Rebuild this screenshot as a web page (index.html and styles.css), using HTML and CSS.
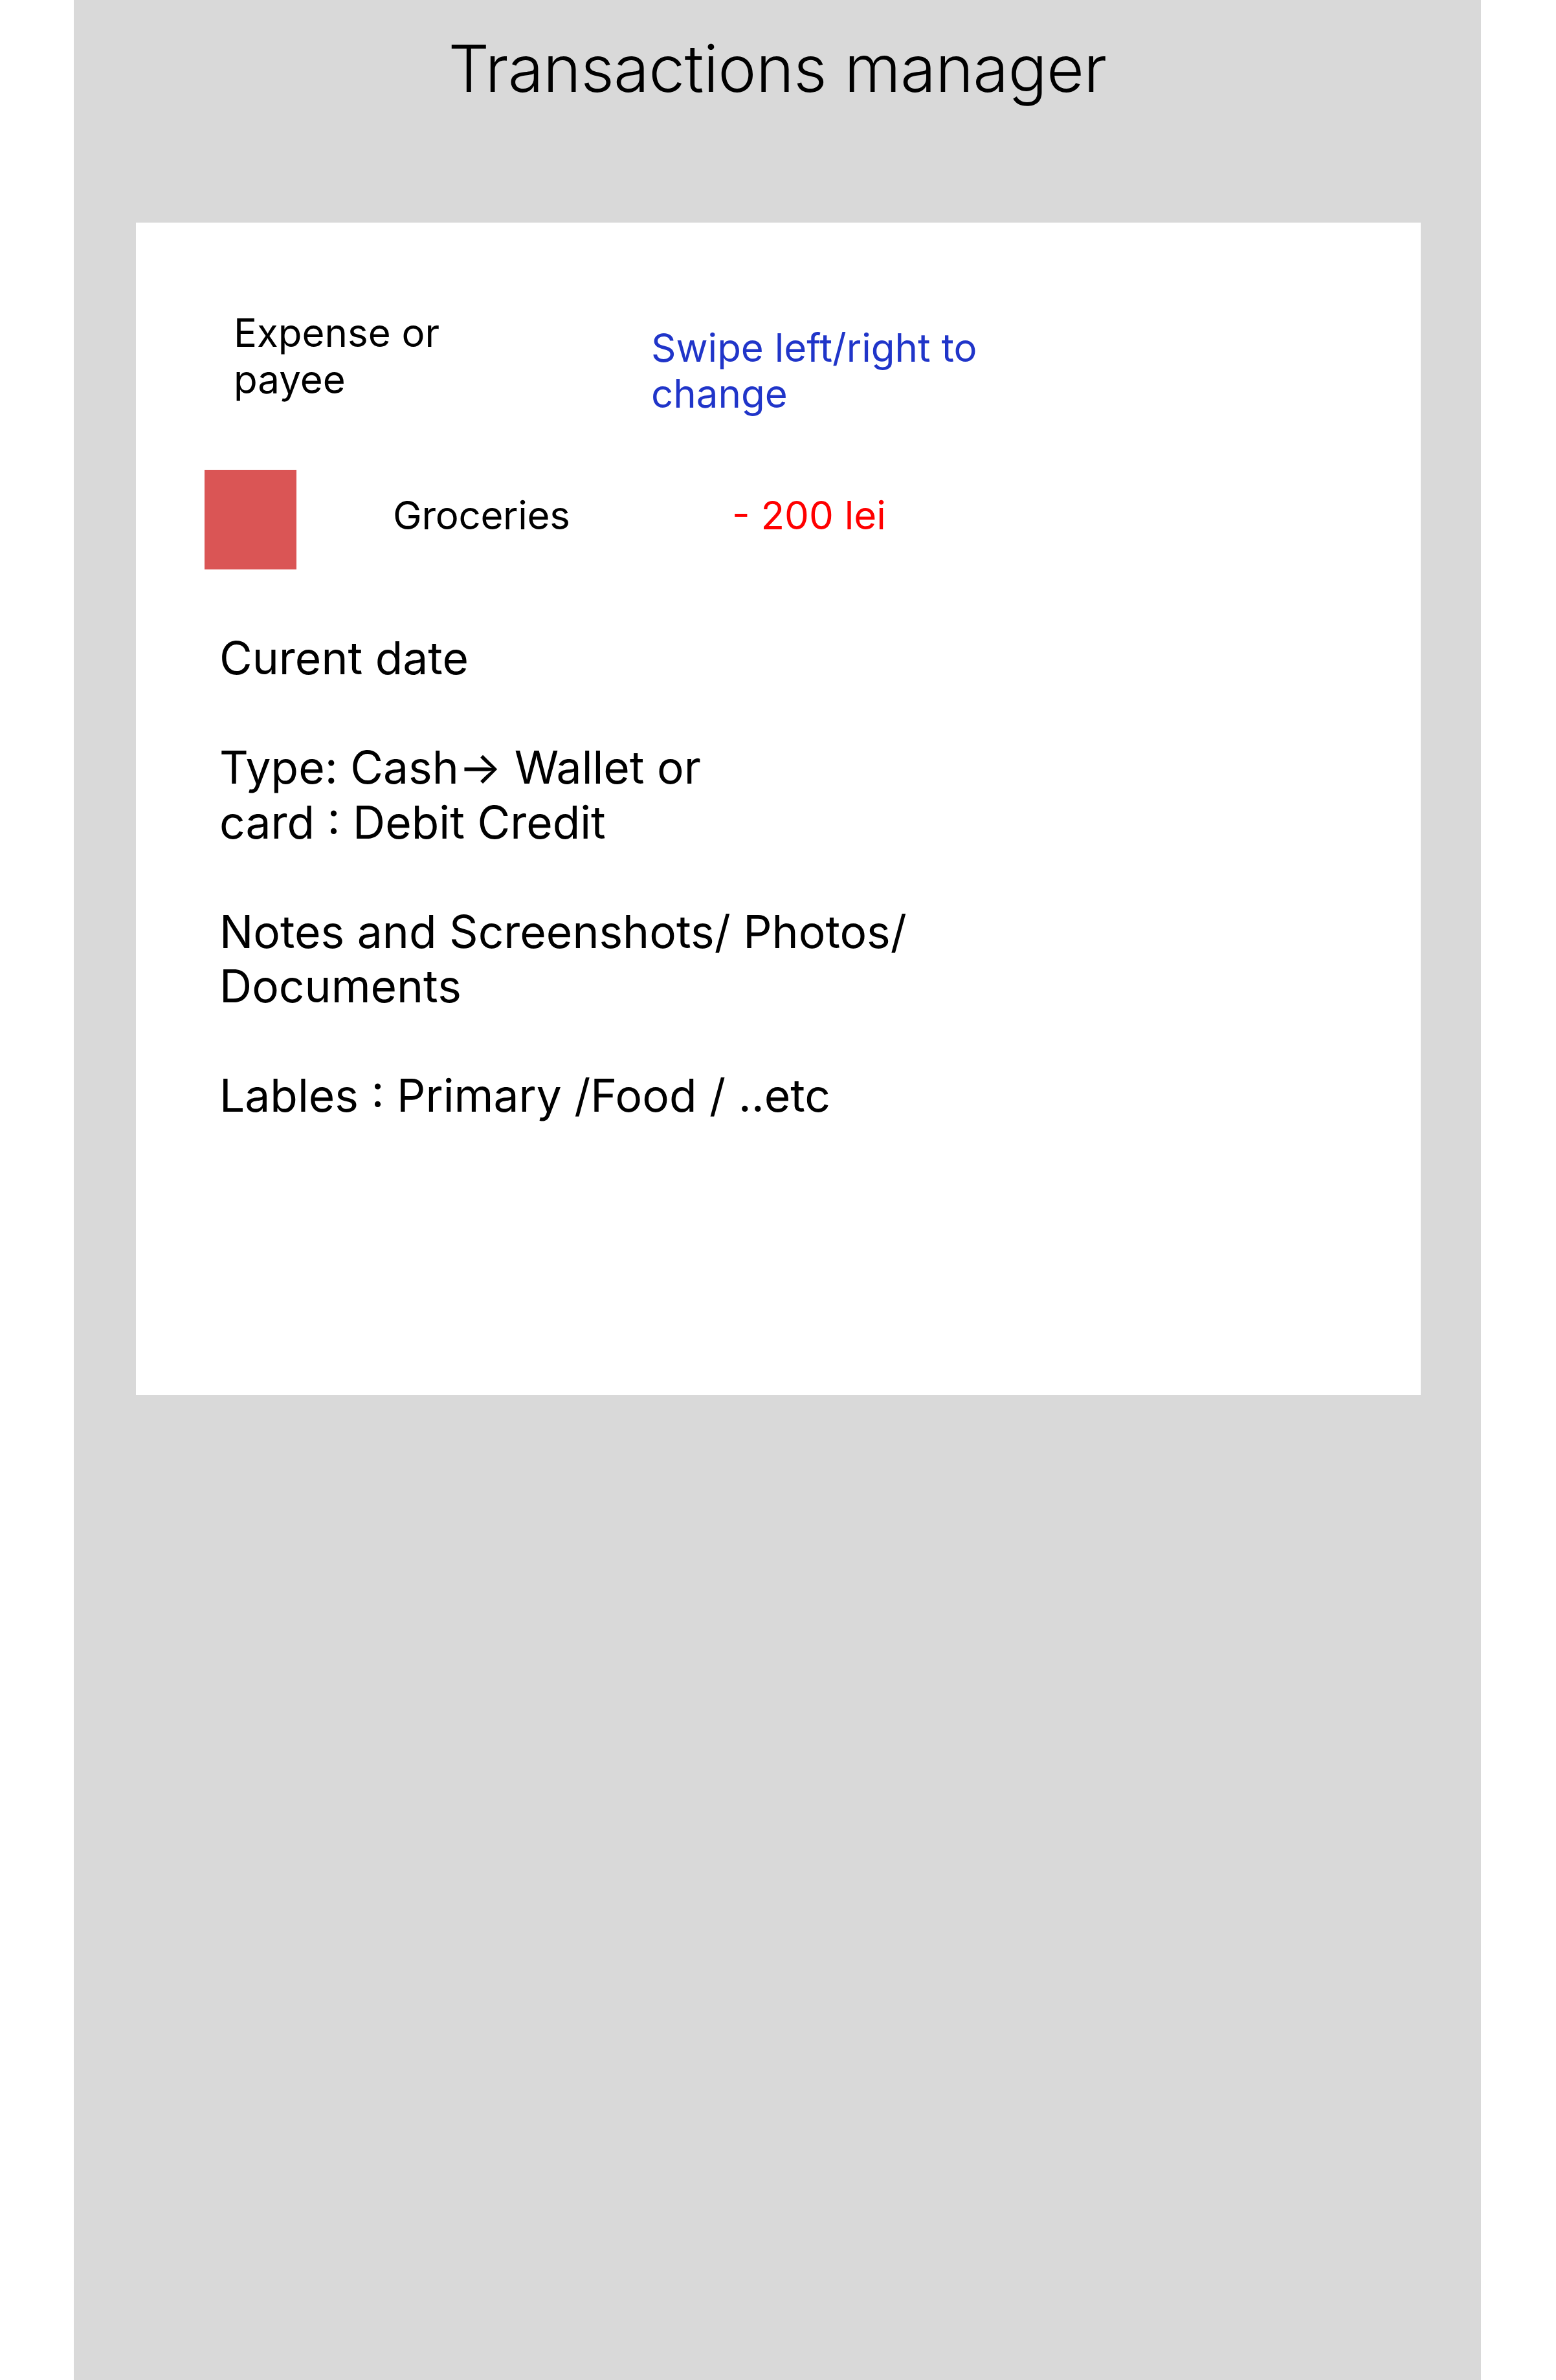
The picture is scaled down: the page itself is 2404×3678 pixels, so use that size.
FILE: index.html
```html
<!DOCTYPE html>
<html lang="en">

<head>
    <meta charset="UTF-8">
    <meta name="viewport" content="width=device-width, initial-scale=1.0">
    <title>Transactions manager</title>
    <link rel="stylesheet" href="styles.css">
</head>

<body>
    <main class="panel">
        <h1 class="title">Transactions manager</h1>
        <section class="card">
            <div class="top-row">
                <p class="kind">Expense or payee</p>
                <p class="hint">Swipe left/right to change</p>
            </div>
            <div class="entry">
                <div class="swatch"></div>
                <p class="entry-name">Groceries</p>
                <p class="entry-amount">- 200 lei</p>
            </div>
            <div class="details">
                <p>Curent date</p>
                <p>Type: Cash→ Wallet or<br>card : Debit Credit</p>
                <p>Notes and Screenshots/ Photos/<br>Documents</p>
                <p>Lables : Primary /Food / ..etc</p>
            </div>
        </section>
    </main>
</body>

</html>
```

FILE: styles.css
```css
body {
    font-family: Inter, "Noto Sans", sans-serif;
    margin: 0;
    background-color: #ffffff;
    color: #000000;
}

p {
    margin: 0;
}

.panel {
    box-sizing: border-box;
    width: 2174px;
    min-height: 3678px;
    margin-left: 114px;
    padding-top: 45px;
    background-color: #d9d9d9;
    display: flex;
    flex-direction: column;
}

.title {
    margin: 0;
    font-size: 100px;
    font-weight: 300;
    line-height: 121px;
    letter-spacing: -0.7px;
    text-align: center;
}

.card {
    box-sizing: border-box;
    width: 1985px;
    height: 1812px;
    margin: 178px 0 0 96px;
    padding: 134px 0 0 106px;
    background-color: #ffffff;
}

.top-row {
    display: flex;
    align-items: flex-start;
}

.kind {
    width: 340px;
    margin-left: 45px;
    font-size: 60px;
    line-height: 72px;
}

.hint {
    width: 560px;
    margin: 24px 0 0 305px;
    font-size: 60px;
    line-height: 71px;
    color: #2035c9;
}

.entry {
    display: flex;
    align-items: flex-start;
    margin-top: 82px;
}

.swatch {
    width: 142px;
    height: 154px;
    background-color: #da5555;
}

.entry-name,
.entry-amount {
    margin-top: 34px;
    font-size: 60px;
    line-height: 72px;
}

.entry-name {
    width: 524px;
    margin-left: 149px;
    letter-spacing: -0.3px;
}

.entry-amount {
    color: #ff0000;
}

.details {
    margin: 95px 0 0 23px;
    font-size: 69.5px;
    line-height: 84.5px;
}

.details p + p {
    margin-top: 84.5px;
}
```
